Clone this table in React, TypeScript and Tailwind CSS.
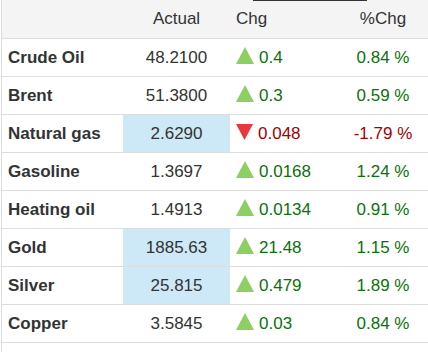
const rows = [
  { name: "Crude Oil", actual: "48.2100", chg: "0.4", pct: "0.84 %", up: true, hl: false },
  { name: "Brent", actual: "51.3800", chg: "0.3", pct: "0.59 %", up: true, hl: false },
  { name: "Natural gas", actual: "2.6290", chg: "0.048", pct: "-1.79 %", up: false, hl: true },
  { name: "Gasoline", actual: "1.3697", chg: "0.0168", pct: "1.24 %", up: true, hl: false },
  { name: "Heating oil", actual: "1.4913", chg: "0.0134", pct: "0.91 %", up: true, hl: false },
  { name: "Gold", actual: "1885.63", chg: "21.48", pct: "1.15 %", up: true, hl: true },
  { name: "Silver", actual: "25.815", chg: "0.479", pct: "1.89 %", up: true, hl: true },
  { name: "Copper", actual: "3.5845", chg: "0.03", pct: "0.84 %", up: true, hl: false },
]

const Arrow = ({ up }: { up: boolean }) =>
  up ? (
    <svg width="18" height="17" viewBox="0 0 18 17" className="mb-1 shrink-0">
      <polygon points="9,0 18,17 0,17" fill="#8dcf62" />
    </svg>
  ) : (
    <svg width="17" height="16" viewBox="0 0 17 16" className="mb-1 shrink-0">
      <polygon points="0,0 17,0 8.5,16" fill="#e8383d" />
    </svg>
  )

export default function App() {
  return (
    <div className="ml-px border-l border-[#dddddd] bg-white font-['Liberation_Sans',Arial,sans-serif] text-[17px] text-[#333333]">
      {/* Header */}
      <div className="relative grid h-[39px] grid-cols-[121px_107px_108px_90px] items-center border-b border-[#dddddd] bg-[#f4f4f4]">
        <div className="absolute left-[251px] top-0 h-px w-[114px] bg-[#333333]" />
        <div />
        <div className="text-center">Actual</div>
        <div className="pl-[6px]">Chg</div>
        <div className="text-center">%Chg</div>
      </div>

      {/* Rows */}
      {rows.map((r) => (
        <div
          key={r.name}
          className="grid h-[38px] grid-cols-[121px_107px_108px_90px] border-b border-[#dddddd]"
        >
          <div className="flex items-center pl-[6px] font-bold">{r.name}</div>
          <div className={`flex items-center justify-center ${r.hl ? "bg-[#cde8f6]" : ""}`}>
            {r.actual}
          </div>
          <div className={`flex items-center gap-[5px] pl-[6px] ${r.up ? "text-[#0d700d]" : "text-[#a30000]"}`}>
            <Arrow up={r.up} />
            <span>{r.chg}</span>
          </div>
          <div className={`flex items-center justify-center ${r.up ? "text-[#0d700d]" : "text-[#a30000]"}`}>
            {r.pct}
          </div>
        </div>
      ))}

      {/* Next row, cut off by the frame: only the arrow tip shows */}
      <div className="grid h-[38px] grid-cols-[121px_107px_108px_90px]">
        <div />
        <div />
        <div className="flex items-center pl-[6px]">
          <Arrow up />
        </div>
        <div />
      </div>
    </div>
  )
}
